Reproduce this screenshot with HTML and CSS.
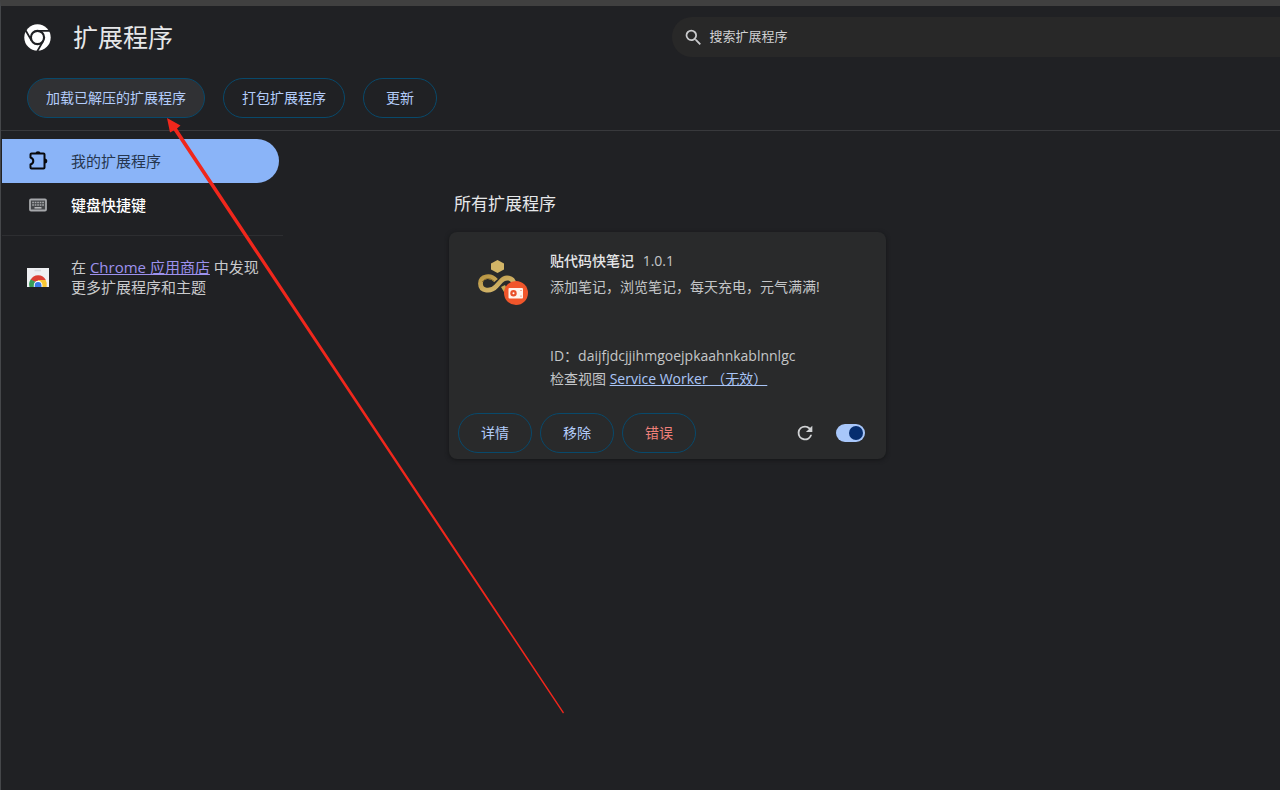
FILE: index.html
```html
<!DOCTYPE html>
<html lang="zh-CN">
<head>
<meta charset="utf-8">
<title>扩展程序</title>
<link rel="stylesheet" href="styles.css">
</head>
<body>
<div class="page">
  <header class="header">
    <div class="brand">
      <svg class="logo" viewBox="0 0 27 27" aria-hidden="true">
        <circle cx="13.500" cy="13.500" r="13.200" fill="#fff"/>
        <circle cx="13.500" cy="13.500" r="6.600" fill="none" stroke="#202124" stroke-width="2.200"/>
        <path d="M13.500 6.900H25.500M7.700 16.850L1.700 6.450M19.300 16.850L13.300 27.200" stroke="#202124" stroke-width="1.800"/>
      </svg>
      <h1 class="title">扩展程序</h1>
    </div>
    <label class="search">
      <svg class="search-icon" viewBox="0 0 24 24" aria-hidden="true"><path fill="#c9cacc" d="M15.500 14h-.79l-.28-.27A6.471 6.471 0 0 0 16 9.500 6.500 6.500 0 1 0 9.500 16c1.610 0 3.090-.59 4.230-1.570l.27.28v.79l5 4.990L20.490 19l-4.990-5zm-6 0C7.010 14 5 11.990 5 9.500S7.010 5 9.500 5 14 7.010 14 9.500 11.990 14 9.500 14z"/></svg>
      <input class="search-input" type="text" placeholder="搜索扩展程序" aria-label="搜索扩展程序">
    </label>
  </header>
  <div class="toolbar">
    <button class="btn btn-active" type="button">加载已解压的扩展程序</button>
    <button class="btn" type="button">打包扩展程序</button>
    <button class="btn btn-short" type="button">更新</button>
  </div>
  <div class="body">
    <aside class="sidebar">
      <nav class="nav">
        <a class="nav-item nav-selected" href="#extensions">
          <svg class="nav-icon" viewBox="0 0 22 22" aria-hidden="true"><path fill="none" stroke="#08090c" stroke-width="2" stroke-linejoin="round" d="M4.500 3.500H16.500Q17.500 3.500 17.500 4.500V17.500Q17.500 18.500 16.500 18.500H4.500Q3.500 18.500 3.500 17.500V14.500Q6.300 13.500 6.300 11Q6.300 8.500 3.500 7.500V4.500Q3.500 3.500 4.500 3.500Z"/><path fill="#08090c" d="M8.500 3.500Q8.500 1.200 11 1.200Q13.500 1.200 13.500 3.500ZM17.500 8.500Q20.300 8.500 20.300 11Q20.300 13.500 17.500 13.500Z"/></svg>
          <span>我的扩展程序</span>
        </a>
        <a class="nav-item nav-strong" href="#shortcuts">
          <svg class="nav-icon" viewBox="0 0 22 22" aria-hidden="true"><rect x="3" y="5.500" width="16" height="11" rx="1" fill="#45474a" stroke="#a6a8ab" stroke-width="1.800"/><path d="M5.200 8.500H17M5.200 11H17" stroke="#a6a8ab" stroke-width="1.500" stroke-dasharray="1.700 .8"/><path d="M7.500 13.800H14.500" stroke="#b4b6b8" stroke-width="1.600"/></svg>
          <span>键盘快捷键</span>
        </a>
      </nav>
      <div class="store">
        <svg class="store-icon" viewBox="0 0 22 19" aria-hidden="true">
          <rect width="22" height="19" fill="#eeeff2"/>
          <path d="M7.500 2.500H14" stroke="#d9dbe0" stroke-width="1.600"/>
          <path d="M3.500 12A8.500 8.500 0 0 1 18.800 12L11 15Z" fill="#dc3f34"/>
          <path d="M3.700 11.600A8.500 8.500 0 0 0 2.500 19H9L11 15Z" fill="#3a9d58"/>
          <path d="M11 12H18.600A8.500 8.500 0 0 1 19.600 19H11Z" fill="#f7c736"/>
          <path d="M6.800 19V17A4.300 4.300 0 0 1 15.400 17V19Z" fill="#fff"/>
          <path d="M7.700 19V17.500A3.400 3.400 0 0 1 14.500 17.500V19Z" fill="#3978e5"/>
        </svg>
        <p class="store-text">在 <a class="store-link" href="#store">Chrome 应用商店</a> 中发现<br>更多扩展程序和主题</p>
      </div>
    </aside>
    <main class="main">
      <h2 class="section-title">所有扩展程序</h2>
      <article class="card">
        <div class="card-body">
          <svg class="ext-icon" viewBox="0 0 52 48" aria-hidden="true">
            <defs><linearGradient id="gold" x1="0" y1="0" x2="1" y2="1"><stop offset="0" stop-color="#b99643"/><stop offset="1" stop-color="#dcc078"/></linearGradient></defs>
            <path d="M20.500 1L27 4.500V10.500L20.500 14L14 10.500V4.500Z" fill="#d2b567"/>
            <path d="M19 21.500C14 15.500 3.500 16.500 3.500 24.500C3.500 32.500 14 33 19 27.500L24 22C28.500 17 36 18.500 37 25" fill="none" stroke="url(#gold)" stroke-width="4.800"/>
            <path d="M5 23Q10 16.500 17 22" fill="none" stroke="#8f722e" stroke-width="1"/>
            <path d="M24 28L28 26L31 32L27 33Z" fill="#c7a954"/>
            <circle cx="39" cy="34" r="12" fill="#f0562b"/>
            <rect x="31.500" y="29" width="14.500" height="10.500" rx="1" fill="#fff4ec"/>
            <circle cx="36.500" cy="34.200" r="3.200" fill="#e9512a"/>
            <circle cx="36.500" cy="34.200" r="1" fill="#fff"/>
            <circle cx="44" cy="31.500" r=".6" fill="#e9512a"/><circle cx="44" cy="37" r=".6" fill="#e9512a"/>
          </svg>
          <div class="info">
            <h3 class="name">贴代码快笔记 <span class="version">1.0.1</span></h3>
            <p class="desc">添加笔记，浏览笔记，每天充电，元气满满!</p>
            <p class="meta">ID：daijfjdcjjihmgoejpkaahnkablnnlgc</p>
            <p class="meta">检查视图 <a class="worker" href="#worker">Service Worker （无效）</a></p>
          </div>
        </div>
        <footer class="actions">
          <button class="btn btn-short" type="button">详情</button>
          <button class="btn btn-short" type="button">移除</button>
          <button class="btn btn-short btn-error" type="button">错误</button>
          <button class="reload" type="button" aria-label="重新加载">
            <svg class="reload-icon" viewBox="0 0 24 24" aria-hidden="true"><path fill="#d0d2d4" d="M17.650 6.350A7.960 7.960 0 0 0 12 4a8 8 0 1 0 7.730 10h-2.080A6 6 0 1 1 12 6c1.660 0 3.140.69 4.220 1.780L13 11h7V4z"/></svg>
          </button>
          <input class="toggle" type="checkbox" role="switch" aria-label="启用" checked>
        </footer>
      </article>
    </main>
  </div>
  <svg class="arrow" width="400" height="598" viewBox="0 0 400 598" aria-hidden="true">
    <path fill="#f0271c" d="M1 1L14.500 8.500L11 11.500L398 595.500L397 596.500L7.800 13.500L4 15.500Z"/>
  </svg>
</div>
</body>
</html>
```
FILE: styles.css
```css
* {
  box-sizing: border-box;
}

body {
  margin: 0;
  background: #202124;
  color: #e6e7e9;
  font-family: "Open Sans", "Noto Sans CJK SC", sans-serif;
  font-size: 14px;
}

h1, h2, h3, p {
  margin: 0;
  font-weight: 400;
}

button, input {
  font: inherit;
}

.page {
  position: relative;
  min-height: 100vh;
  border-top: 6px solid #404040;
  border-left: 1px solid #45474a;
}

.header {
  display: flex;
  justify-content: space-between;
  align-items: center;
  height: 62px;
}

.brand {
  display: flex;
  align-items: center;
  gap: 22px;
  padding-left: 23px;
}

.logo {
  width: 27px;
  height: 27px;
}

.title {
  font-size: 25px;
  line-height: 32px;
}

.search {
  display: flex;
  align-items: center;
  gap: 5px;
  width: 47.500%;
  height: 40px;
  padding-left: 11px;
  border-radius: 20px 0 0 20px;
  background: #282828;
}

.search-icon {
  width: 21px;
  height: 21px;
}

.search-input {
  flex: 1;
  padding: 0 0 2px;
  border: 0;
  outline: 0;
  background: none;
  color: #d0d1d3;
  font-size: 13px;
}

.search-input::placeholder {
  color: #d0d1d3;
}

.toolbar {
  display: flex;
  gap: 18px;
  padding: 10px 26px 12px;
  border-bottom: 1px solid #38393c;
}

.btn {
  height: 40px;
  padding: 0 18px 2px;
  border: 1px solid #08496b;
  border-radius: 20px;
  background: transparent;
  color: #b3ccfa;
  font-size: 14px;
  white-space: nowrap;
}

.btn-active {
  background: #303134;
}

.btn-short {
  padding: 0 22px 2px;
}

.btn-error {
  color: #f0807a;
}

.body {
  display: flex;
}

.sidebar {
  flex: none;
  width: 282px;
  padding: 8px 0 0 1px;
}

.nav {
  padding-bottom: 8px;
  border-bottom: 1px solid #2d2e31;
}

.nav-item {
  display: flex;
  align-items: center;
  gap: 22px;
  width: 277px;
  height: 44px;
  padding-left: 25px;
  border-radius: 0 22px 22px 0;
  color: #fff;
  font-size: 15px;
  text-decoration: none;
}

.nav-item span {
  padding-bottom: 2px;
}

.nav-selected {
  background: #8ab4f8;
  color: #26364f;
}

.nav-strong {
  font-weight: 500;
}

.nav-icon {
  width: 22px;
  height: 22px;
}

.store {
  display: flex;
  align-items: center;
  gap: 22px;
  padding: 21px 0 0 25px;
}

.store-icon {
  width: 22px;
  height: 19px;
}

.store-text {
  color: #c9cacc;
  font-size: 15px;
  line-height: 20px;
  white-space: nowrap;
}

.store-link {
  color: #9d91ee;
}

.main {
  flex: 1;
  padding: 60px 24px 0 166px;
}

.section-title {
  padding-left: 5px;
  font-size: 17px;
  line-height: 26px;
}

.card {
  max-width: 437px;
  margin-top: 15px;
  border-radius: 8px;
  background: #292a2b;
  box-shadow: 0 1px 4px #141517;
}

.card-body {
  display: flex;
  gap: 21px;
  padding: 17px 20px 0 28px;
}

.ext-icon {
  flex: none;
  width: 52px;
  height: 48px;
  margin-top: 10px;
}

.name {
  font-size: 14px;
  font-weight: 500;
  line-height: 24px;
}

.version {
  margin-left: 5px;
  color: #c4c6c8;
  font-weight: 400;
}

.desc {
  height: 71px;
  color: #c4c6c8;
  line-height: 28px;
}

.meta {
  color: #c4c6c8;
  line-height: 23px;
}

.worker {
  color: #a9c5f7;
}

.actions {
  display: flex;
  align-items: center;
  gap: 8px;
  padding: 23px 21px 6px 9px;
}

.reload {
  display: flex;
  margin-left: auto;
  padding: 0;
  border: 0;
  background: none;
}

.reload-icon {
  width: 22px;
  height: 22px;
}

.toggle {
  display: flex;
  align-items: center;
  justify-content: flex-end;
  width: 29px;
  height: 18px;
  margin: 0 0 0 12px;
  padding: 0 2px;
  border-radius: 9px;
  background: #a8c7fa;
  appearance: none;
}

.toggle::before {
  content: "";
  width: 14px;
  height: 14px;
  border-radius: 50%;
  background: #062e6f;
}

.arrow {
  position: absolute;
  top: 111px;
  left: 165px;
  pointer-events: none;
}
```
